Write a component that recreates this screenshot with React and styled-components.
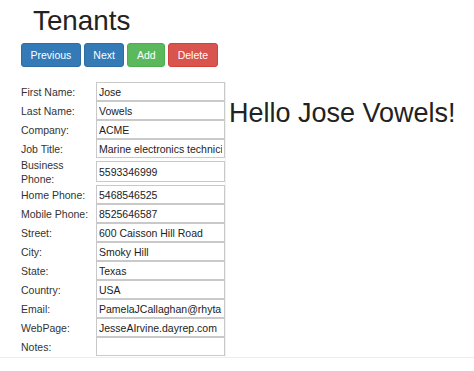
import React from "react";
import styled, { createGlobalStyle } from "styled-components";

const GlobalStyle = createGlobalStyle`
  body {
    margin: 0;
    background: #fff;
    font-family: "Liberation Sans", Arial, sans-serif;
    color: #333;
  }
`;

const Page = styled.div`
  padding: 6px 0 0 21px;
  border-bottom: 1px solid #ededed;
`;

const Title = styled.h1`
  margin: 0 0 7px 12px;
  font-size: 27.8px;
  line-height: 30px;
  font-weight: normal;
  color: #222;
`;

const Toolbar = styled.div`
  display: flex;
  gap: 3px;
  margin-bottom: 15px;
`;

const colors = {
  primary: ["#337ab7", "#2e6da4"],
  success: ["#5cb85c", "#4cae4c"],
  danger: ["#d9534f", "#d43f3a"],
};

const Button = styled.button`
  height: 24px;
  padding: 0 8.5px;
  font-family: inherit;
  font-size: 10.5px;
  color: #fff;
  background: ${(p) => colors[p.$kind][0]};
  border: 1px solid ${(p) => colors[p.$kind][1]};
  border-radius: 3px;
  cursor: pointer;
`;

const Content = styled.div`
  display: flex;
  align-items: flex-start;
`;

const Form = styled.div`
  display: grid;
  grid-template-columns: 75px 129px;
  padding-bottom: 1px;
  border-right: 1px solid #f0f0f0;
`;

const Label = styled.label`
  display: flex;
  align-items: center;
  height: ${(p) => (p.$tall ? "27px" : "19px")};
  font-size: 10.5px;
  line-height: 14px;
  color: #333;
`;

const Cell = styled.div`
  display: flex;
  align-items: center;
  height: ${(p) => (p.$tall ? "27px" : "19px")};
`;

const Input = styled.input`
  box-sizing: border-box;
  width: 129px;
  height: ${(p) => (p.$tall ? "21px" : "19px")};
  margin: 0;
  padding: 0 2px;
  font-family: inherit;
  font-size: 10.5px;
  color: #222;
  border: 1px solid #c9c9c9;
  outline: none;
  background: #fff;
`;

const Greeting = styled.h2`
  margin: 16px 0 0 3px;
  font-size: 27px;
  line-height: 30px;
  font-weight: normal;
  color: #222;
  white-space: nowrap;
`;

const fields = [
  ["First Name:", "Jose"],
  ["Last Name:", "Vowels"],
  ["Company:", "ACME"],
  ["Job Title:", "Marine electronics technician"],
  ["Business Phone:", "5593346999", true],
  ["Home Phone:", "5468546525"],
  ["Mobile Phone:", "8525646587"],
  ["Street:", "600 Caisson Hill Road"],
  ["City:", "Smoky Hill"],
  ["State:", "Texas"],
  ["Country:", "USA"],
  ["Email:", "PamelaJCallaghan@rhyta.com"],
  ["WebPage:", "JesseAIrvine.dayrep.com"],
  ["Notes:", ""],
];

const App = () => {
  return (
    <Page>
      <GlobalStyle />
      <Title>Tenants</Title>
      <Toolbar>
        <Button $kind="primary">Previous</Button>
        <Button $kind="primary">Next</Button>
        <Button $kind="success">Add</Button>
        <Button $kind="danger">Delete</Button>
      </Toolbar>
      <Content>
        <Form>
          {fields.map(([label, value, tall]) => (
            <React.Fragment key={label}>
              <Label $tall={tall}>{label}</Label>
              <Cell $tall={tall}>
                <Input $tall={tall} defaultValue={value} />
              </Cell>
            </React.Fragment>
          ))}
        </Form>
        <Greeting>Hello Jose Vowels!</Greeting>
      </Content>
    </Page>
  );
};

export default App;
